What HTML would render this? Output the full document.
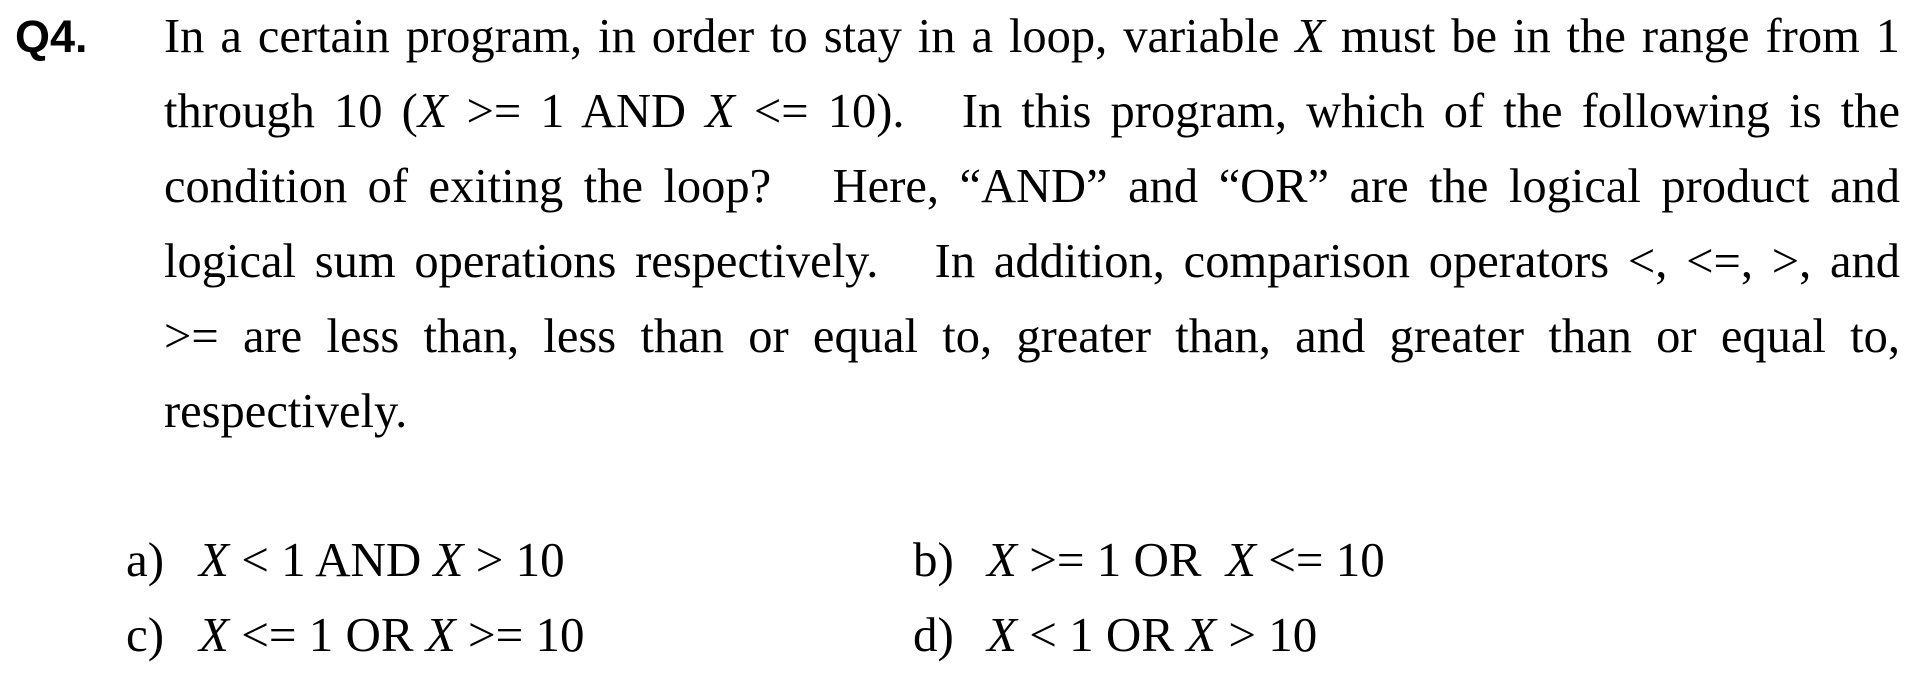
<!DOCTYPE html>
<html><head><meta charset="utf-8"><style>
html,body{margin:0;padding:0;background:#fff;width:1915px;height:678px;overflow:hidden}
body{position:relative;font-family:"Liberation Serif",serif;color:#000}
.l{position:absolute;left:164px;width:1736px;font-size:48.5px;line-height:75px;height:75px;white-space:nowrap}
.j{text-align:justify;text-align-last:justify;white-space:normal}
.q{position:absolute;left:15px;top:-1px;font-family:"Liberation Sans",sans-serif;font-weight:bold;font-size:45px;line-height:75px}
.o{position:absolute;font-size:49px;line-height:75px;white-space:pre}
i{font-style:italic}
</style></head><body>
<div class="q">Q4.</div>
<div class="l j" style="top:-1px">In a certain program, in order to stay in a loop, variable <i>X</i> must be in the range from 1</div>
<div class="l j" style="top:74px">through 10 (<i>X</i> &gt;= 1 AND <i>X</i> &lt;= 10).&nbsp;&nbsp; In this program, which of the following is the</div>
<div class="l j" style="top:149px">condition of exiting the loop?&nbsp;&nbsp; Here, “AND” and “OR” are the logical product and</div>
<div class="l j" style="top:224px">logical sum operations respectively.&nbsp;&nbsp; In addition, comparison operators &lt;, &lt;=, &gt;, and</div>
<div class="l j" style="top:299px">&gt;= are less than, less than or equal to, greater than, and greater than or equal to,</div>
<div class="l" style="top:374px">respectively.</div>
<div class="o" style="left:126px;top:522px">a)</div>
<div class="o" style="left:199px;top:522px"><i>X</i> &lt; 1 AND <i>X</i> &gt; 10</div>
<div class="o" style="left:913px;top:522px">b)</div>
<div class="o" style="left:987px;top:522px"><i>X</i>&#8197;&gt;=&#8197;1 OR  <i>X</i>&#8197;&lt;=&#8197;10</div>
<div class="o" style="left:126px;top:597px">c)</div>
<div class="o" style="left:199px;top:597px"><i>X</i> &lt;= 1 OR <i>X</i> &gt;= 10</div>
<div class="o" style="left:913px;top:597px">d)</div>
<div class="o" style="left:987px;top:597px"><i>X</i>&#8197;&lt;&#8197;1 OR <i>X</i>&#8197;&gt;&#8197;10</div>
</body></html>
